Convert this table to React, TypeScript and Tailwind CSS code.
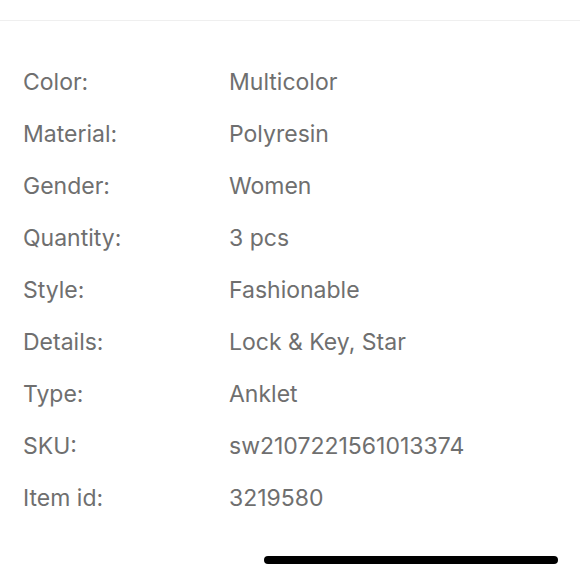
const specs: [string, string][] = [
  ['Color:', 'Multicolor'],
  ['Material:', 'Polyresin'],
  ['Gender:', 'Women'],
  ['Quantity:', '3 pcs'],
  ['Style:', 'Fashionable'],
  ['Details:', 'Lock & Key, Star'],
  ['Type:', 'Anklet'],
  ['SKU:', 'sw2107221561013374'],
  ['Item id:', '3219580'],
];

export default function App() {
  return (
    <div className="w-[580px] h-[580px] bg-white overflow-hidden font-['Inter',sans-serif]">
      {/* top divider */}
      <div className="pt-[20px]">
        <div className="h-px bg-[#efefef]" />
      </div>

      {/* spec list */}
      <div className="pt-[35px] pl-[23px]">
        {specs.map(([label, value]) => (
          <div key={label} className="flex h-[52px] items-center text-[23px] font-normal leading-[52px] text-[#6f6f6f]">
            <span className="w-[206px] shrink-0">{label}</span>
            <span>{value}</span>
          </div>
        ))}
      </div>

      {/* home indicator */}
      <div className="pt-[32px] pl-[264px]">
        <div className="h-[8px] w-[294px] rounded-full bg-black" />
      </div>
    </div>
  );
}
